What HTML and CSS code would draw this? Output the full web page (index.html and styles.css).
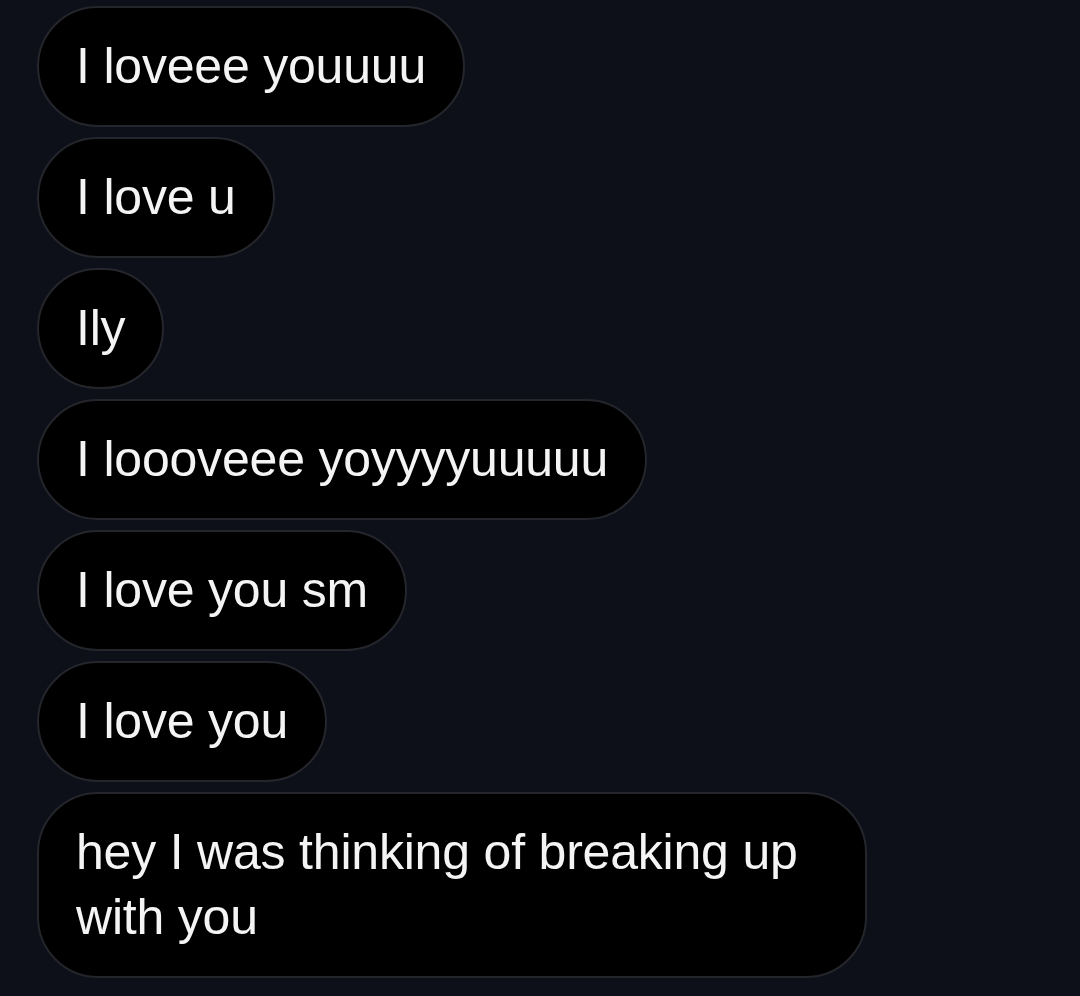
FILE: index.html
```html
<!DOCTYPE html>
<html lang="en">
<head>
    <meta charset="UTF-8">
    <meta name="viewport" content="width=device-width, initial-scale=1.0">
    <title>Messages</title>
    <link rel="stylesheet" href="styles.css">
</head>
<body>
    <div class="thread">
        <div class="bubble">I loveee youuuu</div>
        <div class="bubble">I love u</div>
        <div class="bubble">Ily</div>
        <div class="bubble">I loooveee yoyyyyuuuuu</div>
        <div class="bubble">I love you sm</div>
        <div class="bubble">I love you</div>
        <div class="bubble">hey I was thinking of breaking up with you</div>
    </div>
</body>
</html>
```

FILE: styles.css
```css
body {
    margin: 0;
    min-height: 100vh;
    background: #0d0f19;
    font-family: 'Liberation Sans', Arial, sans-serif;
}

.thread {
    display: flex;
    flex-direction: column;
    align-items: flex-start;
    gap: 10px;
    padding: 6px 0 0 37px;
}

.bubble {
    box-sizing: border-box;
    max-width: 830px;
    padding: 26px 37px;
    background: #000;
    border: 2px solid #25262c;
    border-radius: 61px;
    color: #f4f4f4;
    font-size: 50px;
    line-height: 65px;
    letter-spacing: -0.2px;
}
```
